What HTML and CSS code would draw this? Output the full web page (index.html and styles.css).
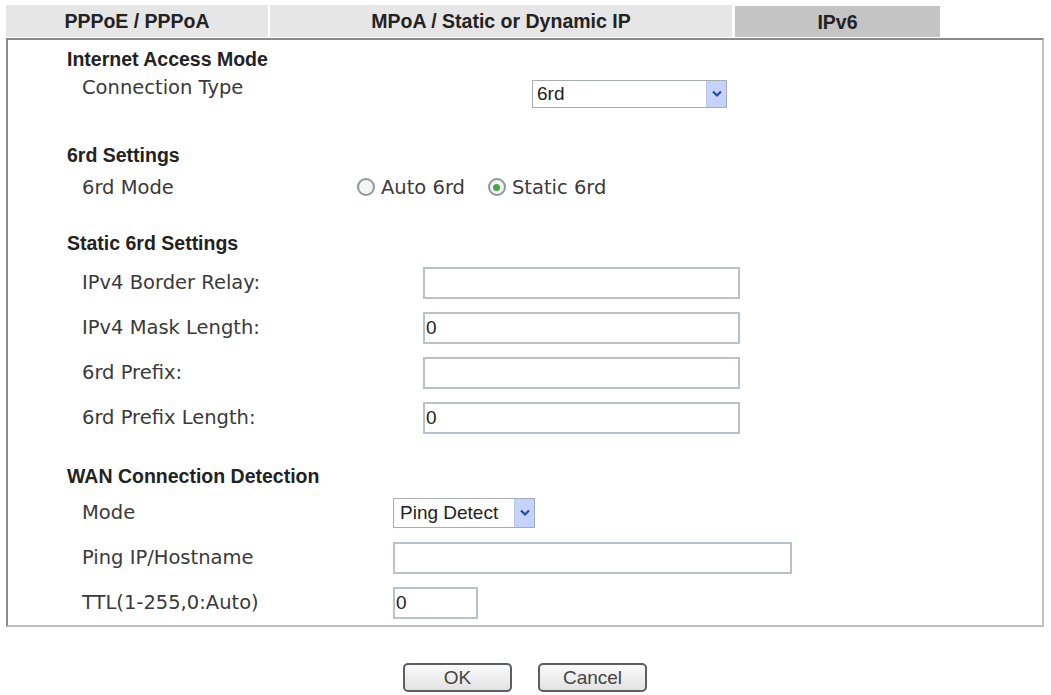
FILE: index.html
```html
<!DOCTYPE html>
<html lang="en">
<head>
    <meta charset="UTF-8">
    <meta name="viewport" content="width=device-width, initial-scale=1.0">
    <title>WAN - Internet Access</title>
    <link rel="stylesheet" href="styles.css">
</head>
<body>
<div class="page">
    <!-- tabs -->
    <div class="tabs">
        <div class="tab tab-pppoe">PPPoE / PPPoA</div>
        <div class="tab tab-mpoa">MPoA / Static or Dynamic IP</div>
        <div class="tab tab-ipv6 active">IPv6</div>
    </div>

    <div class="panel">
        <!-- Internet Access Mode -->
        <div class="section sec-mode">
            <div class="heading">Internet Access Mode</div>
            <div class="row">
                <div class="label">Connection Type</div>
                <div class="field">
                    <span class="select-wrap sel-type">
                        <select class="select"><option>6rd</option></select>
                        <span class="arrow"><svg width="12" height="8" viewBox="0 0 12 8"><path d="M2 1.5 L6 5.5 L10 1.5" fill="none" stroke="#2a4a9a" stroke-width="2.2"/></svg></span>
                    </span>
                </div>
            </div>
        </div>

        <!-- 6rd Settings -->
        <div class="section sec-6rd">
            <div class="heading">6rd Settings</div>
            <div class="row">
                <div class="label">6rd Mode</div>
                <div class="field radios">
                    <label class="radio"><span class="dot"></span>Auto 6rd</label>
                    <label class="radio checked"><span class="dot"></span>Static 6rd</label>
                </div>
            </div>
        </div>

        <!-- Static 6rd Settings -->
        <div class="section sec-static">
            <div class="heading">Static 6rd Settings</div>
            <div class="row">
                <div class="label">IPv4 Border Relay:</div>
                <div class="field"><input class="text wide" type="text" value=""></div>
            </div>
            <div class="row">
                <div class="label">IPv4 Mask Length:</div>
                <div class="field"><input class="text wide" type="text" value="0"></div>
            </div>
            <div class="row">
                <div class="label">6rd Prefix:</div>
                <div class="field"><input class="text wide" type="text" value=""></div>
            </div>
            <div class="row">
                <div class="label">6rd Prefix Length:</div>
                <div class="field"><input class="text wide" type="text" value="0"></div>
            </div>
        </div>

        <!-- WAN Connection Detection -->
        <div class="section sec-wan">
            <div class="heading">WAN Connection Detection</div>
            <div class="row">
                <div class="label">Mode</div>
                <div class="field">
                    <span class="select-wrap sel-ping">
                        <select class="select"><option>Ping Detect</option></select>
                        <span class="arrow"><svg width="12" height="8" viewBox="0 0 12 8"><path d="M2 1.5 L6 5.5 L10 1.5" fill="none" stroke="#2a4a9a" stroke-width="2.2"/></svg></span>
                    </span>
                </div>
            </div>
            <div class="row">
                <div class="label">Ping IP/Hostname</div>
                <div class="field"><input class="text host" type="text" value=""></div>
            </div>
            <div class="row">
                <div class="label">TTL(1-255,0:Auto)</div>
                <div class="field"><input class="text ttl" type="text" value="0"></div>
            </div>
        </div>
    </div>

    <div class="buttons">
        <button class="btn">OK</button>
        <button class="btn">Cancel</button>
    </div>
</div>
</body>
</html>
```

FILE: styles.css
```css
body {
    margin: 0;
    background: #fff;
    font-family: "DejaVu Sans", Verdana, sans-serif;
    color: #333;
}

.page {
    padding: 5px 0 0 6px;
    width: 1038px;
}

/* tabs */
.tabs {
    display: flex;
    height: 32px;
    margin-bottom: 1px;
}

.tab {
    font-family: "Liberation Sans", Arial, sans-serif;
    font-weight: bold;
    font-size: 19.5px;
    color: #222;
    text-align: center;
    line-height: 33px;
    background: #e6e6e6;
}

.tab-pppoe {
    width: 262px;
    margin-right: 2px;
}

.tab-mpoa {
    width: 462px;
    margin-right: 3px;
}

.tab-ipv6 {
    width: 205px;
}

.tab.active {
    background: #c4c4c4;
    margin-top: 1px;
}

/* panel */
.panel {
    border: 2px solid;
    border-color: #8a8a8a #c2c2c2 #bdbdbd #8a8a8a;
    padding: 5px 0 0 0;
    box-sizing: border-box;
    height: 589px;
}

.section {
    padding-left: 59px;
}

.heading {
    font-family: "Liberation Sans", Arial, sans-serif;
    font-weight: bold;
    font-size: 19.5px;
    color: #222;
    height: 28px;
    line-height: 28px;
}

.row {
    display: flex;
    align-items: center;
    padding-left: 15px;
    height: 45px;
}

.label {
    font-size: 19.5px;
    color: #3a3a3a;
}

.sec-mode .row { height: 28px; }
.sec-mode .label { width: 450px; }
.sec-mode .field { margin-top: 14px; }

.sec-6rd { margin-top: 40px; }
.sec-6rd .row { height: 36px; }
.sec-6rd .label { width: 275px; }

.sec-static { margin-top: 24px; }
.sec-static .heading { margin-bottom: 3px; }
.sec-static .label { width: 341px; }

.sec-wan { margin-top: 22px; }
.sec-wan .label { width: 311px; }

/* inputs */
.text {
    font-family: "Liberation Sans", Arial, sans-serif;
    font-size: 19px;
    color: #222;
    height: 32px;
    box-sizing: border-box;
    border: 2px solid #b9c2ca;
    padding: 0 1px;
    margin: 0;
    outline: none;
    background: #fff;
}

.wide { width: 317px; }
.host { width: 399px; }
.ttl { width: 85px; }

/* select with blue arrow box */
.select-wrap {
    position: relative;
    display: inline-block;
}

.select {
    -webkit-appearance: none;
    appearance: none;
    font-family: "Liberation Sans", Arial, sans-serif;
    font-size: 19px;
    color: #222;
    background: #fff;
    border: 1px solid #a5acb2;
    box-sizing: border-box;
    margin: 0;
    padding: 0 0 0 4px;
    display: block;
}

.sel-type .select { width: 195px; height: 28px; line-height: 26px; }
.sel-ping .select { width: 142px; height: 30px; line-height: 28px; padding-left: 6px; }

.arrow {
    position: absolute;
    right: 1px;
    top: 1px;
    bottom: 1px;
    width: 19px;
    background: #c3d3fb;
    border-left: 1px solid #b4c6f0;
    display: flex;
    align-items: center;
    justify-content: center;
}

/* radios */
.radios {
    display: flex;
    gap: 23px;
    font-size: 19.5px;
    color: #3a3a3a;
}

.radio {
    display: flex;
    align-items: center;
}

.dot {
    width: 14px;
    height: 14px;
    border: 2px solid #8f969c;
    border-radius: 50%;
    margin-right: 6px;
    background: #f4f4f4;
    position: relative;
}

.radio.checked .dot::after {
    content: "";
    position: absolute;
    left: 3.5px;
    top: 3.5px;
    width: 7px;
    height: 7px;
    border-radius: 50%;
    background: #3fa847;
}

/* buttons */
.buttons {
    display: flex;
    justify-content: center;
    gap: 26px;
    margin-top: 36px;
}

.btn {
    font-family: "Liberation Sans", Arial, sans-serif;
    font-size: 19px;
    color: #444;
    width: 109px;
    height: 29px;
    border: 2px solid #5b5f63;
    border-radius: 5px;
    background: linear-gradient(#fafafa, #e2e2e2);
    padding: 0;
}
```
